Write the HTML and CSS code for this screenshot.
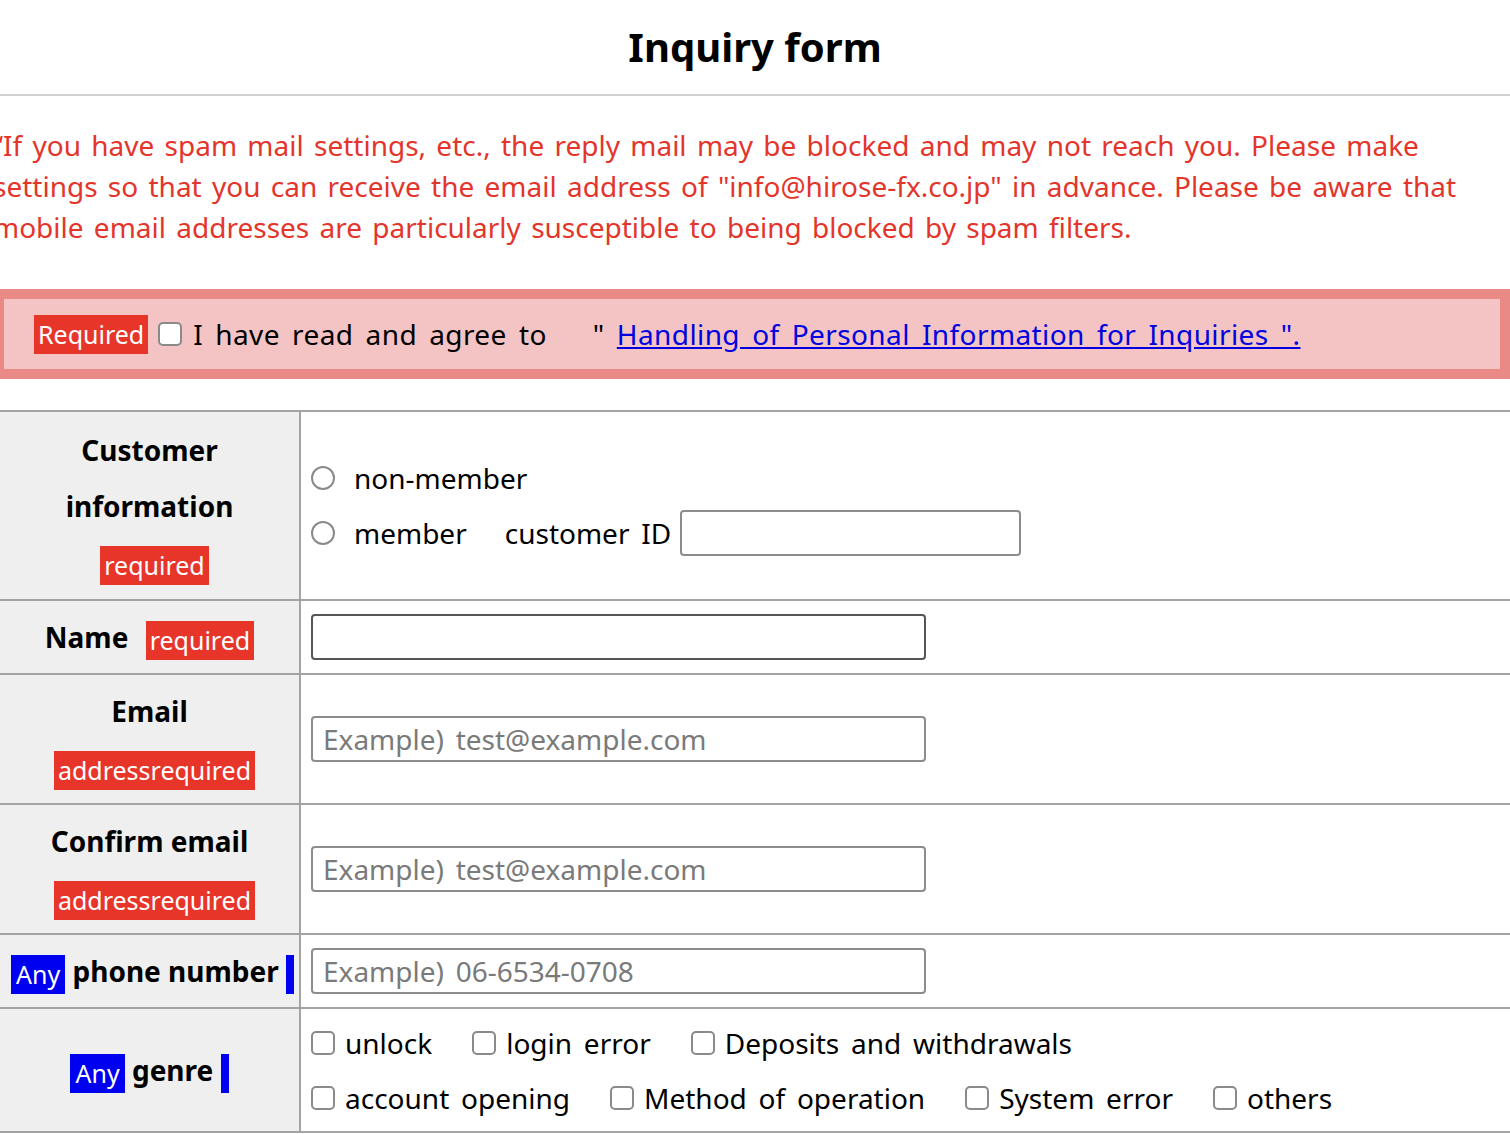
FILE: index.html
```html
<!DOCTYPE html>
<html lang="en">
<head>
  <meta charset="UTF-8" />
  <meta name="viewport" content="width=device-width, initial-scale=1.0"/>
  <title>Inquiry form</title>
  <link rel="stylesheet" href="styles.css">
</head>
<body>

<h1 class="page-title">Inquiry form</h1>

<p class="notice">“If you have spam mail settings, etc., the reply mail may be blocked and may not reach you. Please make settings so that you can receive the email address of "info@hirose-fx.co.jp" in advance. Please be aware that mobile email addresses are particularly susceptible to being blocked by spam filters.</p>

<div class="agree-box">
  <span class="badge">Required</span>
  <label class="agree-label">
    <input type="checkbox" class="check">
    <span>I have read and agree to</span>
  </label>
  <span class="agree-link">" <a href="#">Handling of Personal Information for Inquiries ".</a></span>
</div>

<table class="form-table">
  <colgroup>
    <col class="label-col">
    <col>
  </colgroup>
  <tr>
    <th class="tall">Customer information<br><span class="badge">required</span></th>
    <td>
      <div class="line">
        <label class="opt"><input type="radio" name="member" class="radio"> non-member</label>
      </div>
      <div class="line">
        <label class="opt"><input type="radio" name="member" class="radio"> member</label>
        <span class="id-label">customer ID</span>
        <input type="text" class="text-input id-input">
      </div>
    </td>
  </tr>
  <tr>
    <th>Name <span class="badge">required</span></th>
    <td><input type="text" class="text-input wide dark"></td>
  </tr>
  <tr>
    <th>Email<br><span class="badge">addressrequired</span></th>
    <td><input type="email" class="text-input wide" placeholder="Example) test@example.com"></td>
  </tr>
  <tr>
    <th>Confirm email<br><span class="badge">addressrequired</span></th>
    <td><input type="email" class="text-input wide" placeholder="Example) test@example.com"></td>
  </tr>
  <tr>
    <th class="nowrap"><span class="badge any">Any</span> phone number <span class="badge any bar"></span></th>
    <td><input type="tel" class="text-input wide" placeholder="Example) 06-6534-0708"></td>
  </tr>
  <tr>
    <th><span class="badge any">Any</span> genre <span class="badge any bar"></span></th>
    <td class="genre">
      <div class="line">
        <label class="opt chk"><input type="checkbox" class="check">unlock</label>
        <label class="opt chk"><input type="checkbox" class="check">login error</label>
        <label class="opt chk"><input type="checkbox" class="check">Deposits and withdrawals</label>
      </div>
      <div class="line">
        <label class="opt chk"><input type="checkbox" class="check">account opening</label>
        <label class="opt chk"><input type="checkbox" class="check">Method of operation</label>
        <label class="opt chk"><input type="checkbox" class="check">System error</label>
        <label class="opt chk"><input type="checkbox" class="check">others</label>
      </div>
    </td>
  </tr>
</table>

</body>
</html>
```

FILE: styles.css
```css
html, body {
  margin: 0;
  padding: 0;
  background: #fff;
  color: #000;
  font-family: "Noto Sans", "Liberation Sans", Arial, sans-serif;
  font-size: 28px;
  word-spacing: 4.5px;
  overflow-x: hidden;
}

.page-title {
  margin: 0;
  padding: 18px 0 18px;
  text-align: center;
  font-size: 40px;
  line-height: 58px;
  font-weight: bold;
  word-spacing: normal;
  border-bottom: 2px solid #d0d0d0;
}

.notice {
  margin: 29px 0 0 -7px;
  color: #e3352b;
  line-height: 41px;
  word-spacing: 3px;
}

.badge {
  display: inline-block;
  background: #e8352a;
  color: #fff;
  font-size: 25px;
  line-height: 39px;
  padding: 0 4px;
  font-weight: normal;
  word-spacing: normal;
  letter-spacing: 0;
  vertical-align: middle;
}

.badge.any {
  background: #0000f0;
  padding: 0 5px;
}

.badge.bar {
  height: 39px;
  padding: 0 4px;
}

/* agreement strip */
.agree-box {
  display: flex;
  align-items: center;
  margin: 41px 0 0 -6px;
  width: calc(100% + 6px);
  box-sizing: border-box;
  height: 90px;
  padding: 0 30px;
  background: #f4c3c3;
  border: 10px solid #e98a87;
  letter-spacing: 0.4px;
}

.agree-label {
  display: flex;
  align-items: center;
  gap: 11px;
  margin-left: 10px;
}

.agree-link {
  margin-left: 46px;
}

.agree-link a {
  color: #0000e0;
}

/* inputs */
.check, .radio {
  appearance: none;
  -webkit-appearance: none;
  margin: 0;
  width: 24px;
  height: 24px;
  box-sizing: border-box;
  border: 2px solid #8a8a8a;
  background: #fff;
  flex-shrink: 0;
}

.check {
  border-radius: 5px;
}

.radio {
  border-radius: 50%;
}

.text-input {
  box-sizing: border-box;
  height: 46px;
  margin: 0;
  padding: 0 10px;
  border: 2px solid #8c8c8c;
  border-radius: 4px;
  font-family: inherit;
  font-size: 28px;
  word-spacing: 4.5px;
  color: #000;
  background: #fff;
}

.text-input::placeholder {
  color: #7a7a7a;
}

.text-input.dark {
  border-color: #555;
}

.wide {
  display: block;
  width: 615px;
}

.id-input {
  width: 341px;
}

/* form table */
.form-table {
  width: 100%;
  border-collapse: collapse;
  table-layout: fixed;
  margin-top: 31px;
}

.label-col {
  width: 300px;
}

.form-table tr {
  border-top: 2px solid #a3a3a3;
  border-bottom: 2px solid #a3a3a3;
}

.form-table th {
  background: #efefef;
  border-right: 2px solid #a3a3a3;
  text-align: center;
  font-weight: bold;
  word-spacing: normal;
  line-height: 56px;
  padding: 8px 4px;
}

.form-table th.tall {
  padding-top: 10px;
  padding-bottom: 9px;
}

.form-table th .badge {
  margin-left: 10px;
}

.form-table th .badge.any {
  margin-left: 0;
}

.form-table th.nowrap {
  white-space: nowrap;
  padding: 8px 0 8px 6px;
}

.form-table td {
  padding: 8px 10px;
  vertical-align: middle;
}

.form-table td.genre {
  padding: 6px 10px;
}

.line {
  display: flex;
  align-items: center;
  height: 55px;
}

.opt {
  display: inline-flex;
  align-items: center;
  gap: 19px;
}

.opt.chk {
  gap: 10px;
  margin-right: 40px;
}

.id-label {
  margin-left: 38px;
  margin-right: 9px;
}
```
